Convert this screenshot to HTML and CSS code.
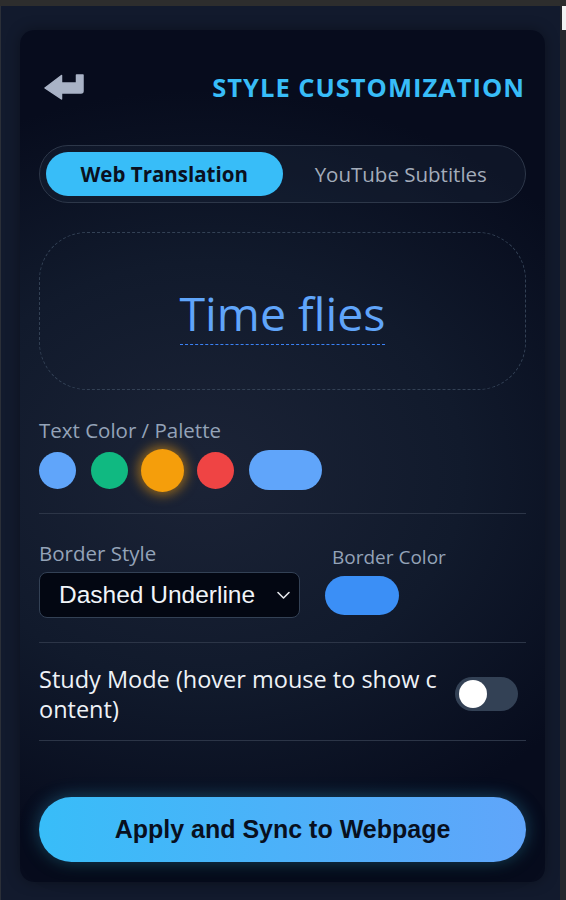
FILE: index.html
```html
<!DOCTYPE html>
<html lang="en">
<head>
    <meta charset="UTF-8">
    <meta name="viewport" content="width=device-width, initial-scale=1.0">
    <title>Style Customization</title>
    <link rel="stylesheet" href="styles.css">
</head>
<body>
    <div class="topbar"></div>
    <div class="window">
        <div class="panel">
            <div class="card">
                <div class="header">
                    <button class="back-btn" title="Back">
                        <svg width="40" height="26" viewBox="0 0 40 26">
                            <path d="M1 14 L17.5 1.5 L17.5 9 L32.5 9 L32.5 1 L39 1 L39 17 Q39 19 37 19 L17.5 19 L17.5 25 Z" fill="#a9b3c6" stroke="#a9b3c6" stroke-width="1.5" stroke-linejoin="round"/>
                        </svg>
                    </button>
                    <h1 class="title">STYLE CUSTOMIZATION</h1>
                </div>

                <div class="tabs">
                    <div class="tab active">Web Translation</div>
                    <div class="tab">YouTube Subtitles</div>
                </div>

                <div class="preview">
                    <span class="preview-text">Time flies</span>
                </div>

                <div class="section palette-section">
                    <div class="label">Text Color / Palette</div>
                    <div class="swatches">
                        <span class="swatch blue"></span>
                        <span class="swatch green"></span>
                        <span class="swatch orange selected"></span>
                        <span class="swatch red"></span>
                        <span class="swatch pill"></span>
                    </div>
                </div>

                <div class="section border-section">
                    <div class="field">
                        <div class="label">Border Style</div>
                        <div class="select">
                            <span>Dashed Underline</span>
                            <svg width="15" height="10" viewBox="0 0 15 10">
                                <path d="M2 2.5 L7.5 8 L13 2.5" fill="none" stroke="#e5e7eb" stroke-width="1.6" stroke-linecap="round" stroke-linejoin="round"/>
                            </svg>
                        </div>
                    </div>
                    <div class="field color-field">
                        <div class="label small">Border Color</div>
                        <span class="color-pill"></span>
                    </div>
                </div>

                <div class="section study-section">
                    <div class="study-text">Study Mode (hover mouse to show content)</div>
                    <div class="toggle"><span class="knob"></span></div>
                </div>

                <button class="apply-btn">Apply and Sync to Webpage</button>
            </div>
        </div>
        <div class="scrollbar"><span class="thumb"></span></div>
    </div>
</body>
</html>
```

FILE: styles.css
```css
body {
    margin: 0;
    background-color: #2b2b2b;
    font-family: "Open Sans", "Noto Sans", sans-serif;
    height: 900px;
    overflow: hidden;
}
.topbar {
    height: 6px;
    background-color: #2d2d2d;
}
.window {
    display: flex;
    height: 894px;
}
.panel {
    width: 560px;
    background-color: #121a2d;
    border-left: 1px solid #2b2f38;
    padding: 24px 0 0 19px;
    box-sizing: border-box;
}
.scrollbar {
    width: 6px;
    background-color: #24262b;
}
.scrollbar .thumb {
    display: block;
    width: 4px;
    height: 24px;
    margin-left: 2px;
    background-color: #f2f2f2;
}
.card {
    width: 525px;
    height: 852px;
    box-sizing: border-box;
    padding: 40px 19px 0;
    border-radius: 14px;
    background: radial-gradient(ellipse 90% 45% at 35% 52%, #1b2336 0%, #111a2c 55%, #070c1d 100%);
    box-shadow: 0 0 14px rgba(0,0,0,0.35);
}
.header {
    display: flex;
    justify-content: space-between;
    align-items: center;
    height: 34px;
    padding-left: 5px;
}
.back-btn {
    background: none;
    border: none;
    padding: 0;
    display: flex;
    cursor: pointer;
}
.title {
    margin: 0;
    color: #38bdf8;
    font-size: 25.5px;
    font-weight: 700;
    letter-spacing: 1px;
    margin-right: 1px;
}
.tabs {
    margin-top: 41px;
    height: 58px;
    box-sizing: border-box;
    border: 1px solid #2d3749;
    border-radius: 29px;
    background-color: rgba(30,41,59,0.35);
    padding: 6px;
    display: flex;
}
.tab {
    flex: 1;
    display: flex;
    align-items: center;
    justify-content: center;
    border-radius: 23px;
    font-size: 20.5px;
    color: #a3acba;
}
.tab.active {
    background-color: #38bdf8;
    color: #0a1020;
    font-weight: 700;
}
.preview {
    margin-top: 29px;
    height: 158px;
    box-sizing: border-box;
    border: 1px dashed #334155;
    border-radius: 48px;
    display: flex;
    align-items: center;
    justify-content: center;
}
.preview-text {
    color: #60a5fa;
    font-size: 46.5px;
    line-height: 1.1;
    padding-bottom: 5px;
    border-bottom: 1px dashed #3b82f6;
    margin-top: 11px;
}
.section {
    border-bottom: 1px solid #2c3547;
}
.label {
    color: #94a3b8;
    font-size: 20.5px;
    line-height: 26px;
}
.label.small {
    font-size: 19px;
}
.palette-section {
    padding: 27px 0 23px;
}
.swatches {
    display: flex;
    align-items: center;
    gap: 15px;
    margin-top: 7px;
    height: 40px;
}
.swatch {
    width: 37px;
    height: 37px;
    border-radius: 50%;
}
.swatch.blue { background-color: #60a5fa; }
.swatch.green { background-color: #10b981; }
.swatch.red { background-color: #ef4444; }
.swatch.orange {
    background-color: #f59e0b;
    width: 43px;
    height: 43px;
    margin: 0 -2px;
    box-shadow: 0 0 12px 3px rgba(245,158,11,0.55);
}
.swatch.pill {
    width: 73px;
    height: 40px;
    border-radius: 20px;
    background-color: #60a5fa;
}
.border-section {
    padding: 26px 0 24px;
    display: flex;
    gap: 32px;
}
.select {
    margin-top: 6px;
    width: 261px;
    height: 46px;
    box-sizing: border-box;
    background-color: #030712;
    border: 1px solid #334155;
    border-radius: 8px;
    display: flex;
    align-items: center;
    justify-content: space-between;
    padding: 0 7px 0 19px;
    font-family: "Liberation Sans", Arial, sans-serif;
    font-size: 24.5px;
    color: #f1f5f9;
}
.select svg {
    margin-right: 1px;
}
.color-field {
    padding-top: 4px;
}
.color-pill {
    display: block;
    margin-top: 6px;
    margin-left: -7px;
    width: 74px;
    height: 39px;
    border-radius: 20px;
    background-color: #3b8ff6;
}
.study-section {
    padding: 21px 0 16px;
    display: flex;
    align-items: center;
    justify-content: space-between;
}
.study-text {
    width: 404px;
    color: #eef2f7;
    font-size: 23.5px;
    line-height: 30px;
    word-break: break-all;
}
.toggle {
    width: 63px;
    height: 34px;
    border-radius: 17px;
    background-color: #334155;
    margin-right: 8px;
    display: flex;
    align-items: center;
    padding-left: 4px;
    box-sizing: border-box;
}
.knob {
    width: 28px;
    height: 28px;
    border-radius: 50%;
    background-color: #ffffff;
}
.apply-btn {
    display: block;
    margin-top: 56px;
    width: 100%;
    height: 65px;
    border: none;
    border-radius: 33px;
    background: linear-gradient(90deg, #38bdf8, #60a5fa);
    color: #08101f;
    font-family: "Liberation Sans", Arial, sans-serif;
    font-size: 25px;
    font-weight: 700;
    box-shadow: 0 0 18px rgba(56,189,248,0.35), 0 8px 20px rgba(0,0,0,0.5);
    cursor: pointer;
}
```
